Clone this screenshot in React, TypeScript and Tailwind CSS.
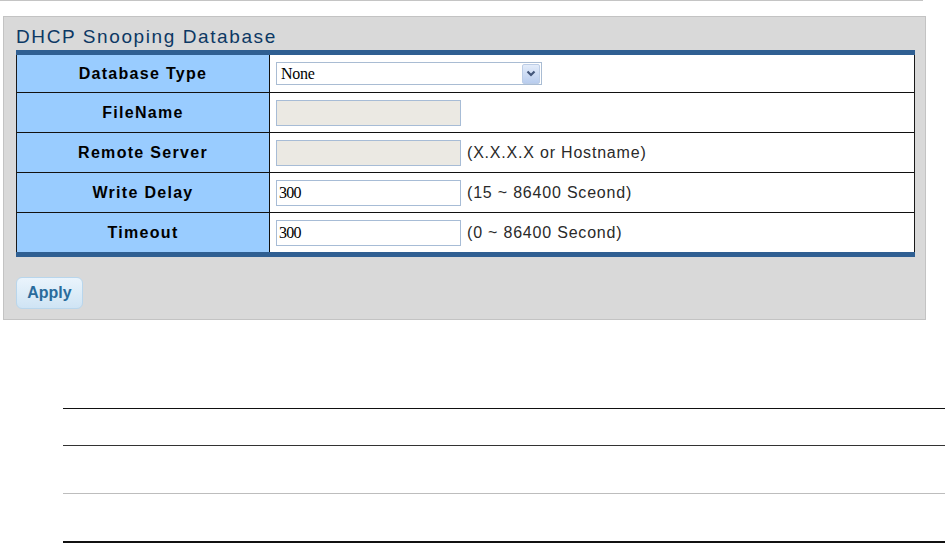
import React from "react";

const rows = [
  { label: "Database Type", kind: "select" },
  { label: "FileName", kind: "disabled", hint: "" },
  { label: "Remote Server", kind: "disabled", hint: "(X.X.X.X or Hostname)" },
  { label: "Write Delay", kind: "input", value: "300", hint: "(15 ~ 86400 Sceond)" },
  { label: "Timeout", kind: "input", value: "300", hint: "(0 ~ 86400 Second)" },
];

function SelectBox() {
  return (
    <div className="flex h-[23px] w-[266px] items-center justify-between border border-[#a9bcd3] bg-white pl-[4px] pr-[1px]">
      <span className="font-['Liberation_Serif',serif] text-[16px] leading-none tracking-[-0.3px] text-black">None</span>
      <span className="flex h-[20px] w-[18px] items-center justify-center rounded-[2px] border border-[#bccde6] bg-gradient-to-b from-[#e3ecfa] to-[#b9cdee]">
        <svg width="10" height="7" viewBox="0 0 10 7">
          <path d="M1.5 1.5 L5 5 L8.5 1.5" fill="none" stroke="#44577b" strokeWidth="2.2" />
        </svg>
      </span>
    </div>
  );
}

export default function App() {
  return (
    <div className="w-[945px] bg-white pb-[1px] font-['Liberation_Sans',Arial,sans-serif]">
      {/* top rule */}
      <div className="h-px w-[923px] bg-[#c4c4c4]" />

      {/* ================= PANEL ================= */}
      <div className="ml-[3px] mt-[15px] w-[923px] border border-[#c3c3c3] bg-[#d9d9d9] pb-[10px]">
        <div className="h-[33px] pl-[12px] pt-[9px] text-[19px] leading-[22px] tracking-[1.6px] text-[#0c3864]">
          DHCP Snooping Database
        </div>

        <div className="ml-[12px] w-[899px]">
          <div className="h-[5px] bg-[#2f5f92]" />
          <div className="border-x border-[#1a1a1a]">
            {rows.map((row, i) => (
              <div
                key={row.label}
                className={`flex ${i === 0 ? "h-[37px]" : "h-[40px] border-t border-[#111]"}`}
              >
                <div className="flex w-[253px] items-center justify-center border-r border-[#111] bg-[#99ccff] text-[16px] font-bold tracking-[1.3px] text-black">
                  {row.label}
                </div>
                <div className="flex flex-1 items-center gap-[6px] bg-white pl-[6px]">
                  {row.kind === "select" && <SelectBox />}
                  {row.kind === "disabled" && (
                    <div className="h-[26px] w-[185px] border border-[#a7bcd6] bg-[#ebe9e3]" />
                  )}
                  {row.kind === "input" && (
                    <div className="flex h-[26px] w-[185px] items-center border border-[#a7bcd6] bg-white pl-[2px] font-['Liberation_Serif',serif] text-[16px] tracking-[-0.8px] text-black">
                      {row.value}
                    </div>
                  )}
                  {row.hint && (
                    <span className="text-[16px] tracking-[0.8px] text-[#2a2a2a]">{row.hint}</span>
                  )}
                </div>
              </div>
            ))}
          </div>
          <div className="h-[5px] bg-[#2f5f92]" />
        </div>

        <button className="ml-[12px] mt-[20px] h-[32px] w-[67px] rounded-[6px] border border-[#b9d6ec] bg-gradient-to-b from-[#eaf4fc] to-[#cfe4f4] text-[16px] font-bold text-[#2a6c9c]">
          Apply
        </button>
      </div>

      {/* ================= RULES BELOW ================= */}
      <div className="ml-[63px] mt-[88px]">
        <div className="h-[37px] border-t border-[#111]" />
        <div className="h-[48px] border-t border-[#333]" />
        <div className="h-[48px] border-t border-[#bdbdbd]" />
        <div className="border-t-2 border-[#111]" />
      </div>
    </div>
  );
}
